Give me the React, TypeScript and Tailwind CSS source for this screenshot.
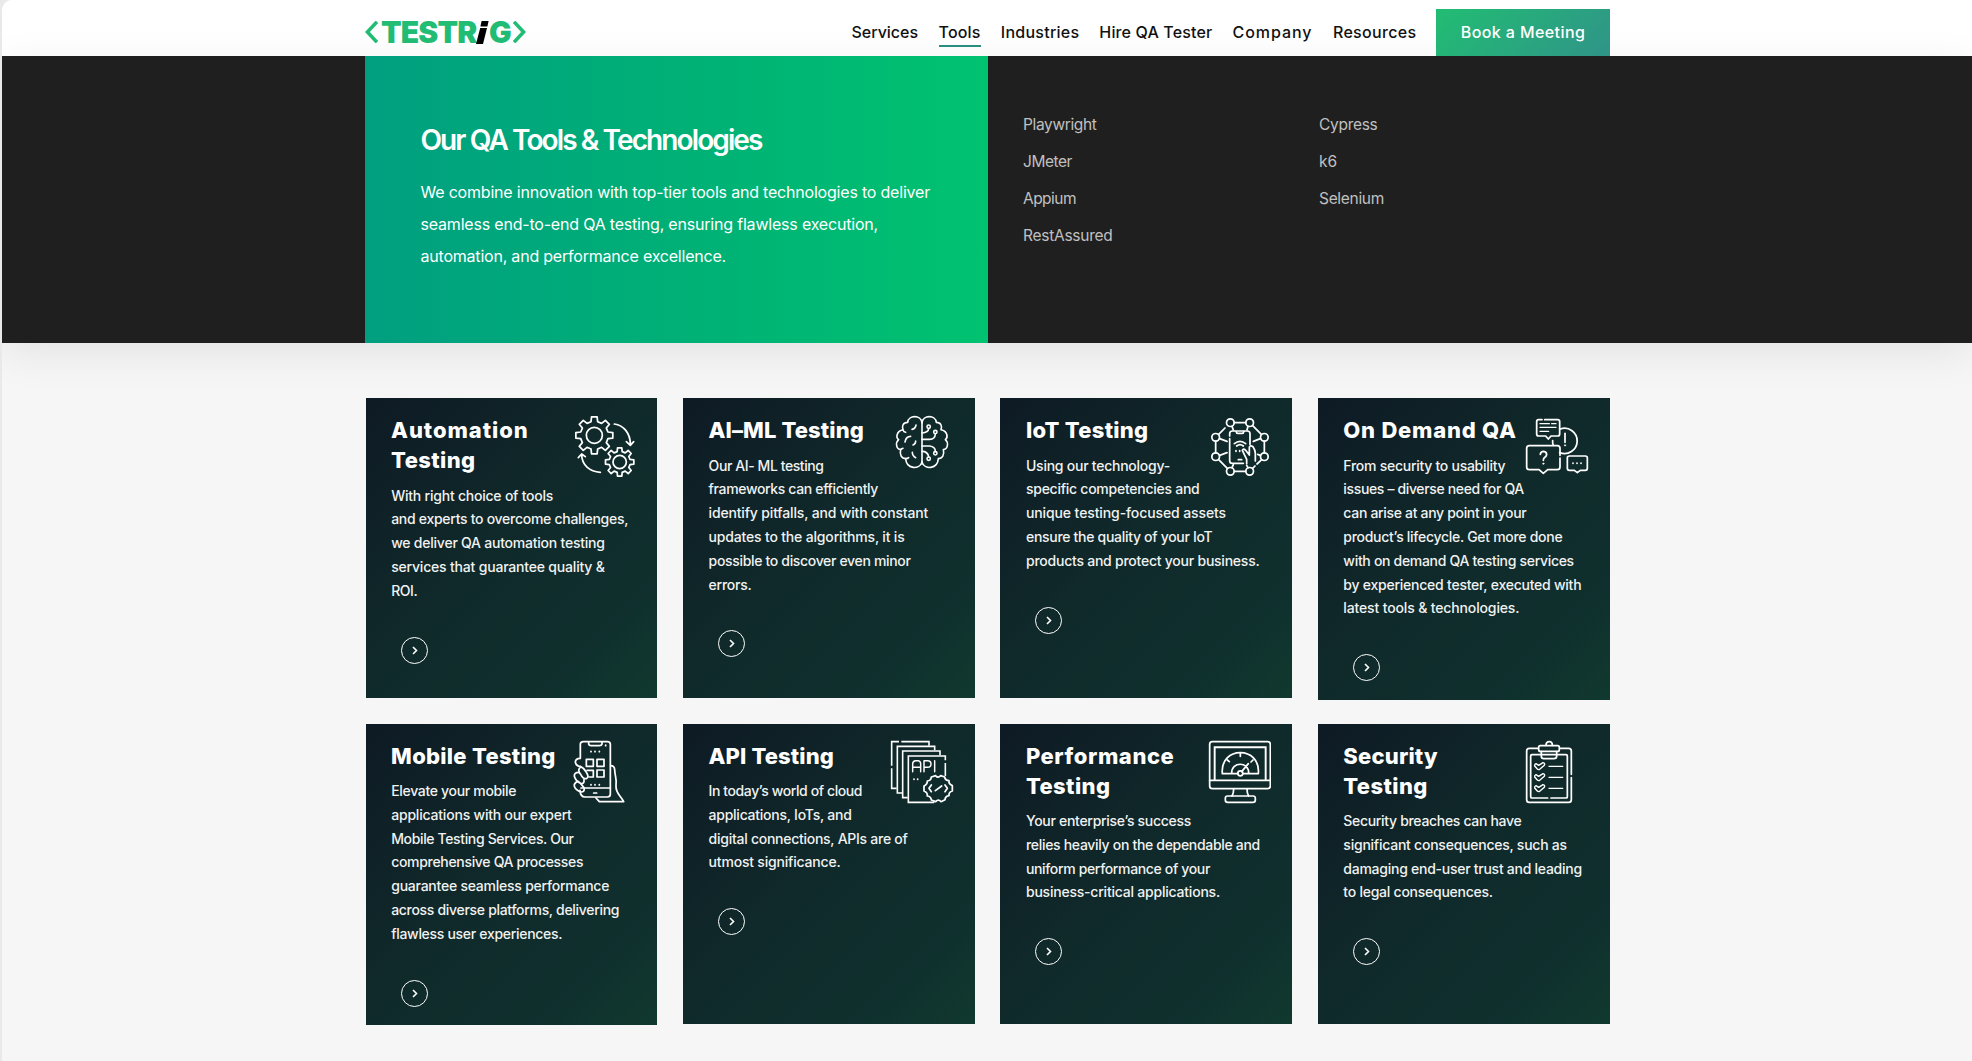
import { useLayoutEffect, useRef, type ReactNode } from "react";

/* A single line of text, tracked so that it fills the given width. */
function Line({ w, children, className = "" }: { w: number; children: string; className?: string }) {
  const ref = useRef<HTMLSpanElement>(null);
  useLayoutEffect(() => {
    const el = ref.current;
    if (!el) return;
    el.style.letterSpacing = "0px";
    const natural = el.getBoundingClientRect().width;
    el.style.letterSpacing = `${(w + 1.5 - natural) / children.length}px`;
  }, [w, children]);
  return (
    <span className={`block w-fit whitespace-nowrap ${className}`} ref={ref}>
      {children}
    </span>
  );
}

function gear(cx: number, cy: number, outer: number, inner: number) {
  const pts: string[] = [];
  for (let i = 0; i < 8; i++) {
    const a = (i * 45 * Math.PI) / 180;
    const steps: [number, number][] = [
      [-0.24, inner],
      [-0.15, outer],
      [0.15, outer],
      [0.24, inner],
    ];
    steps.forEach(([d, r]) => {
      pts.push(`${(cx + r * Math.cos(a + d)).toFixed(1)},${(cy + r * Math.sin(a + d)).toFixed(1)}`);
    });
  }
  return `M${pts.join("L")}Z`;
}

function Icon({ box, children }: { box: string; children: ReactNode }) {
  return (
    <div className="float-right -mt-[0.6px] mr-[21px] h-[60px] w-16">
      <svg
        className="size-16"
        viewBox={box}
        fill="none"
        stroke="#fff"
        strokeWidth={5.2}
        strokeLinecap="round"
        strokeLinejoin="round"
      >
        {children}
      </svg>
    </div>
  );
}

const GearsIcon = () => (
  <Icon box="637 72 192 192">
    <path d={gear(704, 136, 56, 42)} />
    <circle cx="704" cy="136" r="24" />
    <path d={gear(780, 216, 43, 32)} />
    <circle cx="780" cy="216" r="20" />
    <path d="M764 102C792 106 813 130 812 165M800 155l12 11l10-11" />
    <path d="M722 247C690 244 666 226 666 193M656 203l10-11l11 8" />
  </Icon>
);

const halfBrain =
  "M741 98C738 74 700 74 698 97C684 97 680 109 684 119C664 123 662 143 671 149C660 158 664 178 677 179C673 195 680 206 692 206C694 238 734 240 741 216";

const BrainIcon = () => (
  <Icon box="645 72 192 192">
    <g strokeWidth={4.8}>
      <path d={halfBrain} />
      <path d={halfBrain} transform="translate(1482 0) scale(-1 1)" />
      <path d="M741 92V222" />
      <path d="M723 105Q721 117 711 118M690 156Q693 139 707 139M722 153Q722 162 714 165M712 187Q712 198 722 203M684 120Q686 126 692 127M677 179Q679 175 684 175M692 206Q698 206 701 203" />
      <path d="M761 116Q760 128 741 129M781 132Q780 148 764 148H741M741 168H764Q781 170 781 184M741 184Q758 184 761 200" />
      <circle cx="761" cy="110" r="5" />
      <circle cx="781" cy="126" r="5" />
      <circle cx="781" cy="190" r="5" />
      <circle cx="761" cy="206" r="5" />
    </g>
  </Icon>
);

const iotNodes: [number, number][] = [
  [721, 98],
  [779, 98],
  [823, 142],
  [823, 200],
  [779, 244],
  [721, 244],
  [677, 200],
  [677, 142],
];

const IotIcon = () => (
  <Icon box="651 72 192 192">
    {iotNodes.map(([x, y]) => (
      <circle key={`${x}-${y}`} cx={x} cy={y} r="11.5" />
    ))}
    <path d="M733 98H767M788 107L814 133M823 154V188M815 209L801 222M795 228L788 235M767 244H733M712 235L686 209M677 188V154M686 133L705 114" />
    <path d="M726 109L730 120M774 109L771 120M689 146L711 154M811 146L790 154M689 196L711 188M726 233L730 224M774 233L770 226M811 196L803 193" />
    <path d="M719 138V131Q719 123 727 123H772Q780 123 780 131V163M719 146V212Q719 220 727 220H760M738 124Q739 130 744 130H756Q761 130 762 124" />
    <path d="M733 161Q750 147 767 161M740 168Q750 160 760 168" />
    <path d="M738 182V184M749 182V184M745 209H755" />
    <path d="M770 221V208L757 181Q760 174 767 181L778 195V172Q780 164 789 170Q796 180 796 190V213" />
  </Icon>
);

const ChatIcon = () => (
  <Icon box="660 72 192 192">
    <path d="M711 89H701Q695 89 695 95V132Q695 138 701 138H722L730 147L738 138H758Q764 138 764 132V95Q764 89 758 89H719" />
    <path d="M705 101H733M740 101H753M705 112H753M705 124H731" strokeWidth={4} />
    <path d="M766 117A38 38 0 1 1 764 188M743 152Q742 160 745 166" />
    <path d="M780 130V157" />
    <circle cx="780" cy="166" r="2" fill="#fff" strokeWidth={2} />
    <path d="M765 196V175Q765 167 757 167H673Q665 167 665 175V231Q665 239 673 239H702L715 250L728 239H757Q765 239 765 231V204" />
    <path d="M706 193Q707 184 716 184Q725 185 725 194Q724 200 718 203Q715 206 715 211" />
    <circle cx="715" cy="221" r="2" fill="#fff" strokeWidth={2} />
    <path d="M793 198H841Q847 198 847 204V235Q847 241 841 241H826L817 248L808 241H793Q787 241 787 235V204Q787 198 793 198Z" />
    <path d="M804 219V220M816 219V220M828 219V220" />
  </Icon>
);

const PhoneIcon = () => (
  <Icon box="637 75 192 192">
    <path d="M662 128V88Q662 80 671 80H743Q752 80 752 88V238Q752 246 743 246H676Q662 245 661 226" />
    <path d="M687 82V87Q688 92 694 92H719Q726 92 727 87V82M738 90V92M664 219H752M702 234H711" />
    <path d="M694 109V110M706 109V110M719 109V110M694 209V210M706 209V210M719 209V210" />
    <path d="M680 133H701V154H680ZM712 133H733V154H712ZM712 165H733V186H712ZM682 166H701V186H688" />
    <path d="M662 130Q647 130 647 142Q650 154 662 155M662 154Q671 158 679 170Q690 186 680 191Q670 192 663 178Q652 165 662 157Z" />
    <path d="M657 172Q643 172 644 184Q648 198 662 205Q675 208 673 194M655 199Q642 204 644 214Q648 226 664 231Q676 231 673 218Q664 205 655 199Z" />
    <path d="M753 152Q764 152 765 164C766 187 772 190 769 213C768 235 782 240 792 260H719L709 249" />
  </Icon>
);

const ApiIcon = () => (
  <Icon box="645 75 192 192">
    <g strokeLinecap="butt" strokeLinejoin="miter" strokeWidth={4.8}>
      <path d="M672 80H650V152M650 160V220H665M679 80H762V92" />
      <path d="M779 106V94H667V234H682" />
      <path d="M795 121V108H683V248H698" />
      <path d="M811 136V123H700V262H778M811 144V183" />
    </g>
    <path d="M713 170V148Q713 137 722 137H730Q737 138 737 147V170M713 157H737M747 170V137H758Q768 137 768 147Q768 157 758 157H748M779 137V170" strokeWidth={4.4} />
    <path d="M717 192V193M728 192V193" />
    <path d="M782 182Q789 191 797 182L809 186Q811 197 822 197Q820 207 832 212V228Q821 231 822 242Q811 243 810 254L798 260Q790 251 782 260L769 255Q768 244 757 243Q758 232 747 228V213Q757 209 757 198Q768 197 769 186Z" />
    <path d="M769 210L762 220L769 230M810 210L817 220L810 230M781 227L800 213" />
  </Icon>
);

const MonitorIcon = () => (
  <Icon box="651 75 192 192">
    <rect x="659" y="80" width="182" height="141" rx="8" />
    <path d="M659 196H841" />
    <path d="M674 195V97H827V195" strokeWidth={5.8} strokeLinejoin="miter" />
    <path d="M697 176C689 92 813 92 805 176H759M743 176H697M725 174C725 139 776 139 776 174M755 170L775 146" />
    <circle cx="751" cy="175" r="7.5" />
    <path d="M751 115V124M712 135L718 140M789 135L783 141" />
    <path d="M731 222Q731 235 726 243M771 222Q771 235 776 243" />
    <rect x="706" y="243" width="90" height="19" rx="7" />
  </Icon>
);

const ClipboardIcon = () => (
  <Icon box="660 75 192 192">
    <path d="M699 100H673Q665 100 665 108V254Q665 262 673 262H791Q799 262 799 254V188M799 178V108Q799 100 791 100H765" />
    <path d="M708 119H681Q677 119 677 123V245Q677 249 681 249H728M738 249H783Q787 249 787 245V123Q787 119 783 119H756" />
    <rect x="701" y="92" width="62" height="17" rx="5" />
    <path d="M723 91Q723 80 733 80Q742 80 742 91M709 110V124Q709 131 716 131H747Q755 131 755 124V110M710 119H754" />
    {[154, 187, 220].map((y) => (
      <g key={y} strokeWidth={4.2}>
        <path d={`M732 ${y}H773`} />
        <path d={`M693 ${y - 8}L701 ${y - 3}L714 ${y - 11}Q721 ${y - 10} 718 ${y - 3}L704 ${y + 9}Q700 ${y + 11} 697 ${y + 8}L689 ${y - 1}Q688 ${y - 6} 693 ${y - 8}Z`} />
      </g>
    ))}
  </Icon>
);

type CardData = { title: [string, number][]; body: [string, number][]; icon: () => ReactNode };

const rowOne: CardData[] = [
  {
    title: [["Automation", 136], ["Testing", 83]],
    icon: GearsIcon,
    body: [
      ["With right choice of tools", 161],
      ["and experts to overcome challenges,", 236],
      ["we deliver QA automation testing", 212.5],
      ["services that guarantee quality &", 212.5],
      ["ROI.", 25],
    ],
  },
  {
    title: [["AI–ML Testing", 154]],
    icon: BrainIcon,
    body: [
      ["Our AI- ML testing", 114],
      ["frameworks can efficiently", 168.5],
      ["identify pitfalls, and with constant", 218.5],
      ["updates to the algorithms, it is", 195],
      ["possible to discover even minor", 201],
      ["errors.", 42],
    ],
  },
  {
    title: [["IoT Testing", 121]],
    icon: IotIcon,
    body: [
      ["Using our technology-", 143],
      ["specific competencies and", 172.5],
      ["unique testing-focused assets", 199],
      ["ensure the quality of your IoT", 185.5],
      ["products and protect your business.", 232.5],
    ],
  },
  {
    title: [["On Demand QA", 172]],
    icon: ChatIcon,
    body: [
      ["From security to usability", 161],
      ["issues – diverse need for QA", 179.5],
      ["can arise at any point in your", 182],
      ["product’s lifecycle. Get more done", 218],
      ["with on demand QA testing services", 229.5],
      ["by experienced tester, executed with", 237],
      ["latest tools & technologies.", 175],
    ],
  },
];

const rowTwo: CardData[] = [
  {
    title: [["Mobile Testing", 163]],
    icon: PhoneIcon,
    body: [
      ["Elevate your mobile", 124],
      ["applications with our expert", 179.5],
      ["Mobile Testing Services. Our", 181.5],
      ["comprehensive QA processes", 191],
      ["guarantee seamless performance", 217],
      ["across diverse platforms, delivering", 227],
      ["flawless user experiences.", 170],
    ],
  },
  {
    title: [["API Testing", 124]],
    icon: ApiIcon,
    body: [
      ["In today’s world of cloud", 152.5],
      ["applications, IoTs, and", 142],
      ["digital connections, APIs are of", 198],
      ["utmost significance.", 131],
    ],
  },
  {
    title: [["Performance", 147], ["Testing", 83]],
    icon: MonitorIcon,
    body: [
      ["Your enterprise’s success", 164],
      ["relies heavily on the dependable and", 233],
      ["uniform performance of your", 183],
      ["business-critical applications.", 193],
    ],
  },
  {
    title: [["Security", 93], ["Testing", 83]],
    icon: ClipboardIcon,
    body: [
      ["Security breaches can have", 177],
      ["significant consequences, such as", 222.5],
      ["damaging end-user trust and leading", 237.5],
      ["to legal consequences.", 148.5],
    ],
  },
];

function Card({ data, pad }: { data: CardData; pad: string }) {
  const CardIcon = data.icon;
  return (
    <article className={`min-h-[300px] bg-[linear-gradient(135deg,#0e1a24_0%,#10292a_45%,#0f302e_80%,#11392e_100%)] ${pad}`}>
      <CardIcon />
      <h3 className="pl-[25.5px] text-[22px] leading-[30px] font-extrabold text-white">
        {data.title.map(([t, w]) => (
          <Line key={t} w={w}>{t}</Line>
        ))}
      </h3>
      <div className="mt-[8.6px] pl-[25.6px] text-[14px] leading-[23.8px] font-[450] text-[#f0f2f2]">
        {data.body.map(([t, w]) => (
          <Line key={t} w={w - 0.5}>{t}</Line>
        ))}
      </div>
      <a className="mt-[34.1px] ml-[35px] flex size-[27px] items-center justify-center rounded-full border border-white">
        <svg className="size-[9px]" viewBox="0 0 9 9" fill="none" stroke="#fff" strokeWidth="1.6">
          <path d="M3 1l3.5 3.5L3 8" />
        </svg>
      </a>
    </article>
  );
}

const nav: [string, number, string][] = [
  ["Services", 66.5, "mr-[20.5px]"],
  ["Tools", 42, "mr-[20.3px]"],
  ["Industries", 78.5, "mr-[20px]"],
  ["Hire QA Tester", 113, "mr-[20.2px]"],
  ["Company", 80, "mr-[20.4px]"],
  ["Resources", 83.5, "mr-[19.6px]"],
];

const linksLeft: [string, number][] = [["Playwright", 72], ["JMeter", 47.5], ["Appium", 51.5], ["RestAssured", 88]];
const linksRight: [string, number][] = [["Cypress", 57], ["k6", 16.5], ["Selenium", 63.5]];

function Logo() {
  return (
    <div className="mt-[21px] flex h-[22px] w-[161px] items-center text-[30px] leading-[22px] font-black text-[#22bd74]">
      <svg className="mr-[3px] h-[22px] w-[13px] shrink-0" viewBox="0 0 13 22" fill="none" stroke="currentColor" strokeWidth="3.6">
        <path d="M12 .8L2.4 11L12 21.2" />
      </svg>
      <span className="w-[95px]"><Line w={94}>TESTR</Line></span>
      <svg className="h-[24px] w-[13px] shrink-0" viewBox="0 0 13 24" fill="#000">
        <path d="M5.6 1H12.6L11.4 6.4H4.4ZM4.2 8H11L7 24H0Z" />
      </svg>
      <span className="w-[23px]"><Line w={22}>G</Line></span>
      <svg className="ml-px h-[22px] w-[13px] shrink-0" viewBox="0 0 13 22" fill="none" stroke="currentColor" strokeWidth="3.6">
        <path d="M1 .8L10.6 11L1 21.2" />
      </svg>
    </div>
  );
}

export default function App() {
  return (
    <div className="h-[1061px] w-[1972px] overflow-hidden bg-[#e9e9e9] pl-[2px] font-['Inter',sans-serif]">
      <div className="h-full overflow-hidden rounded-tl-[10px] bg-[#f6f6f6]">
        <header className="flex h-14 justify-between bg-white pr-[362px] pl-[363px]">
          <Logo />
          <nav className="flex items-start text-[16px] font-medium text-[#111]">
            {nav.map(([label, w, gap]) => (
              <a key={label} className={`mt-5 ${gap}`}>
                <Line w={w - 1.5} className="leading-6">{label}</Line>
                {label === "Tools" && <span className="mt-px block h-0.5 bg-[#2a9082]" />}
              </a>
            ))}
            <a className="relative z-10 mt-[9px] flex h-[47px] w-[174px] justify-center bg-[linear-gradient(135deg,#21bd73,#309488)] pt-[11px] text-white">
              <Line w={123} className="leading-6">Book a Meeting</Line>
            </a>
          </nav>
        </header>

        <section className="relative flex h-[287px] bg-[#1f1f1f] pl-[363px] shadow-[0_10px_40px_rgba(0,0,0,0.08)]">
          <div className="w-[623px] bg-[linear-gradient(90deg,#009f80,#00b076_50%,#00c270)] pt-[66px] pl-[55.5px] text-white">
            <h2 className="text-[28px] leading-9 font-semibold"><Line w={339.5}>Our QA Tools & Technologies</Line></h2>
            <div className="mt-[18px] text-[16px] leading-8">
              <Line w={508}>We combine innovation with top-tier tools and technologies to deliver</Line>
              <Line w={456}>seamless end-to-end QA testing, ensuring flawless execution,</Line>
              <Line w={304}>automation, and performance excellence.</Line>
            </div>
          </div>
          <div className="grid grid-cols-[296px_296px] pt-[50px] pl-[35px] text-[15.5px] leading-[37px] text-[#c0c0c0]">
            {[linksLeft, linksRight].map((links, i) => (
              <div key={i}>
                {links.map(([t, w]) => (
                  <Line key={t} w={w}>{t}</Line>
                ))}
              </div>
            ))}
          </div>
        </section>

        <main className="pt-[55px] pl-[363.6px]">
          <div className="grid h-[326px] grid-cols-[repeat(4,291.8px)] items-start gap-x-[25.6px]">
            {rowOne.map((c) => <Card key={c.title[0][0]} data={c} pad="pt-[17px] pb-[18.4px]" />)}
          </div>
          <div className="grid grid-cols-[repeat(4,291.8px)] items-start gap-x-[25.6px]">
            {rowTwo.map((c) => <Card key={c.title[0][0]} data={c} pad="pt-[16.5px] pb-[17.8px]" />)}
          </div>
        </main>
      </div>
    </div>
  );
}
